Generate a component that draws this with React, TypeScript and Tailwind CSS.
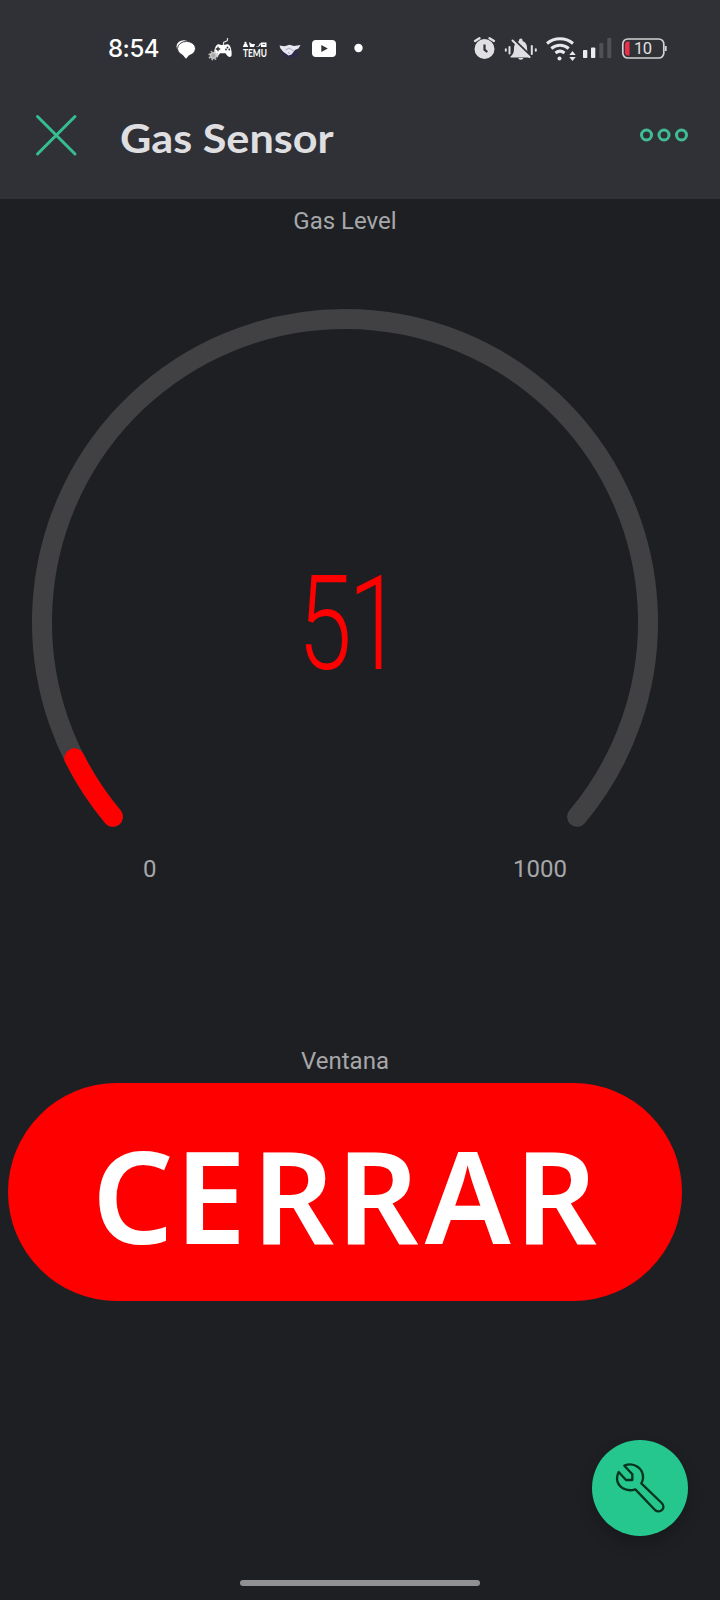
import React from "react";

const START = 140;
const SWEEP = 260;

function point(angle: number) {
  const a = (angle * Math.PI) / 180;
  return `${(345 + 303 * Math.cos(a)).toFixed(2)} ${(622 + 303 * Math.sin(a)).toFixed(2)}`;
}

function arc(fraction: number) {
  const end = START + SWEEP * fraction;
  return `M${point(START)} A303 303 0 ${SWEEP * fraction > 180 ? 1 : 0} 1 ${point(end)}`;
}

function NotificationIcons() {
  return (
    <>
      <svg className="h-10 w-9" viewBox="170 28 36 40" fill="#fff">
        <ellipse cx="183.800" cy="46.500" rx="7.300" ry="6.300" />
        <ellipse cx="186.500" cy="48.600" rx="9" ry="7.200" stroke="#303136" strokeWidth="0.900" />
        <path d="M182 54l4 4.800 4-4.800z" />
      </svg>
      <svg className="h-10 w-8" viewBox="206 28 32 40" fill="#fff">
        <path d="M223.500 45v-2.200c0-1.500 4-1 4-2.800v-2" fill="none" stroke="#ddd" strokeWidth="1.200" />
        <path d="M217.500 44.500c2-.8 3 .6 5 .6s4-1.400 6-.6c2.500 1 3.700 8.500 3 11-.8 2.700-4 1.500-6-2.300h-5.500c-2 3.800-5.300 4.800-6 2.300-.6-2.500 1-10 3.500-11z" />
        <path d="M218 46.800v4.400m-2.200-2.200h4.400" stroke="#303136" strokeWidth="1.300" />
        <circle cx="227.500" cy="47.500" r=".9" fill="#303136" />
        <circle cx="229.300" cy="49.500" r=".9" fill="#303136" />
        <circle cx="226" cy="49.500" r=".9" fill="#303136" />
        <circle cx="213.300" cy="55.500" r="2.800" fill="#a8a8aa" stroke="#c8c8c8" strokeWidth="1.500" />
        <circle cx="213.300" cy="55.500" r="4.300" fill="none" stroke="#c4c4c4" strokeWidth="1.300" strokeDasharray="1.700 1.700" />
      </svg>
      <svg className="h-10 w-[37px]" viewBox="238 28 37 40" fill="#fff">
        <path d="M243 46.500l1-2.500h3l1 2.500v.5h-5zM245.500 41.500l1.500 1.500-1.500 1.500-1.500-1.500zM249 42l3 2h3l-1 3h-4zM256 46.500c2 0 3-.5 4-3.500l1 .5c-.3 2.300-1.500 3.500-4.500 3.500zM261 42.500h5.500v4.500h-5.500z" />
        <path d="M262.500 44.500h2.500" fill="none" stroke="#303136" strokeWidth=".7" />
        <text x="243" y="57" textLength="24" lengthAdjust="spacingAndGlyphs" fontFamily="Lato" fontWeight="700" fontSize="10.500">TEMU</text>
      </svg>
      <svg className="h-10 w-8" viewBox="275 28 32 40">
        <ellipse cx="290" cy="53" rx="8" ry="5" fill="#2c2a48" />
        <path d="M279.500 45.500l5 .8 5-1.500 4.500 1.200 6.500-1-2 3.500-3.500 1.500-3.500 4.500-3 1-5-3.500-3-3.500z" fill="#e8e7f2" />
        <path d="M285.500 50l3.500-2 4.500 3M288 52.500l2 1" fill="none" stroke="#8a87aa" strokeWidth=".7" />
      </svg>
      <svg className="h-10 w-[36px]" viewBox="307 28 36 40">
        <rect x="312" y="40" width="24" height="17" rx="4" fill="#fff" />
        <path d="M321.300 45v7l6.500-3.500z" fill="#303136" />
      </svg>
      <svg className="h-10 w-8" viewBox="343 28 32 40">
        <circle cx="358.500" cy="48" r="4.200" fill="#fff" />
      </svg>
    </>
  );
}

function SystemIcons() {
  return (
    <>
      <svg className="h-10 w-[30px]" viewBox="470 28 30 40">
        <circle cx="484.500" cy="49" r="10" fill="#e0e0e2" />
        <path d="M484.500 44.500v5.200l2.800 2.300" fill="none" stroke="#303136" strokeWidth="2.200" />
        <path d="M475 41l4.500-2.800M489.500 38.200l4.500 2.800" stroke="#e0e0e2" strokeWidth="2.300" strokeLinecap="round" />
      </svg>
      <svg className="h-10 w-[42px]" viewBox="500 28 42 40">
        <path d="M510.500 56.500c2.500-2 3.500-4 3.500-8 0-4.500 2.500-6.500 5-7.300v-1a1.800 1.800 0 013.600 0v1c2.700.8 4.500 2.800 4.500 7.300 0 4 1 6 3.500 8v1h-20zM518.300 58h5a2.500 1.800 0 01-5 0z" fill="#e0e0e2" />
        <path d="M514.500 40.500l17 16.500" stroke="#303136" strokeWidth="2.500" />
        <path d="M512.500 40.500l17 16.500" stroke="#e0e0e2" strokeWidth="2" strokeLinecap="round" />
        <path d="M505.800 49.300v1.500M509.500 47v6.500M531.800 46v8M535.800 49.300v1.500" stroke="#e0e0e2" strokeWidth="2" strokeLinecap="round" />
      </svg>
      <svg className="h-10 w-[37px]" viewBox="542 28 37 40" fill="none" stroke="#e8e8ea" strokeWidth="3">
        <path d="M547 43.500c7.500-6.300 18.500-6.300 26 0M551.300 48.500c5-4.400 12.400-4.400 17.400 0M555.500 53c2.700-2.300 6.300-2.300 9 0" />
        <circle cx="559.500" cy="58.500" r="2" fill="#e8e8ea" stroke="none" />
        <path d="M572.500 51l3.200 4h-6.400zM572.500 61l3.200-4h-6.400z" fill="#e8e8ea" stroke="none" />
      </svg>
      <svg className="h-10 w-[38px]" viewBox="579 28 38 40">
        <rect x="583" y="50" width="4.300" height="8" rx=".8" fill="#ececee" />
        <rect x="591" y="47.500" width="4.300" height="10.500" rx=".8" fill="#ececee" />
        <rect x="599.300" y="43" width="4" height="15" rx=".8" fill="#505155" />
        <rect x="607.300" y="38" width="4" height="20" rx=".8" fill="#505155" />
      </svg>
      <svg className="h-10 w-[55px]" viewBox="617 28 55 40">
        <rect x="622.800" y="39" width="41" height="19" rx="5" fill="none" stroke="#d2d2d4" strokeWidth="1.700" />
        <path d="M665.800 46v5" stroke="#d2d2d4" strokeWidth="1.800" />
        <path d="M629.500 41.500v14h-1.500a3 3 0 01-3-3v-8a3 3 0 013-3z" fill="#ef2f49" />
        <text x="634" y="54.300" fill="#e0e0e2" fontFamily="Roboto" fontSize="16.500" textLength="18">10</text>
      </svg>
    </>
  );
}

export default function App() {
  return (
    <div className="relative flex h-[1600px] w-[720px] flex-col overflow-hidden bg-[#1e1f23] font-['Roboto',sans-serif]">
      <header className="h-[199px] bg-[#303136] pt-7">
        <div className="flex h-10 items-center pr-12 pl-[108px]">
          <span className="w-[62px] pt-0.5 font-['Inter',sans-serif] text-[24px] leading-10 font-[450] tracking-[-0.5px] text-white">8:54</span>
          <NotificationIcons />
          <div className="ml-auto flex">
            <SystemIcons />
          </div>
        </div>
        <div className="mt-7 flex h-[78px] items-center pr-6 pl-8">
          <svg className="h-12 w-12" viewBox="32 111 48 48" stroke="#35bf90" strokeWidth="3" strokeLinecap="round">
            <path d="M37.500 116.500l37.500 37.500M75 116.500l-37.500 37.500" />
          </svg>
          <h1 className="ml-10 origin-left scale-x-[1.08] pt-1.5 font-['Lato',sans-serif] text-[40px] leading-[48px] font-bold text-[#dfdfe2]">Gas Sensor</h1>
          <svg className="ml-auto h-4 w-14" viewBox="640 127.500 56 16" fill="none" stroke="#3fbe94" strokeWidth="3">
            <circle cx="646.500" cy="135.500" r="5" />
            <circle cx="664" cy="135.500" r="5" />
            <circle cx="681.500" cy="135.500" r="5" />
          </svg>
        </div>
      </header>

      <main className="flex w-[690px] flex-col">
        <p className="pt-1.5 text-center text-[24px] leading-8 text-[#a6a7aa]">Gas Level</p>
        <div className="grid h-[610px] place-items-center">
          <svg className="col-start-1 row-start-1 h-[610px] w-[690px]" viewBox="0 237 690 610" fill="none" strokeWidth="20" strokeLinecap="round">
            <path d={arc(1)} stroke="#414144" />
            <path d={arc(0.051)} stroke="#ff0000" />
          </svg>
          <span className="col-start-1 row-start-1 mt-[164px] ml-[7px] scale-x-[0.74] text-[132px] leading-none font-[280] tracking-[-5px] text-[#ff0000]">51</span>
        </div>
        <div className="flex h-[43px] items-end justify-between pr-[123px] pl-[143px] text-[24px] leading-[42px] text-[#a6a7aa]">
          <span>0</span>
          <span>1000</span>
        </div>
        <p className="mt-[155px] text-center text-[24px] leading-8 text-[#a6a7aa]">Ventana</p>
        <button className="mt-1.5 ml-2 flex h-[218px] w-[674px] items-center justify-center rounded-full bg-[#ff0000] pt-[5px] font-['Noto_Sans',sans-serif] text-[128px] leading-none font-semibold text-white">
          <span className="tracking-[1px]">C</span>
          <span className="tracking-[6px]">E</span>
          <span className="tracking-[2px]">R</span>
          <span className="tracking-[6px]">R</span>
          <span className="tracking-[4px]">A</span>
          <span className="pr-px">R</span>
        </button>
      </main>

      <button className="absolute top-[1440px] left-[592px] h-24 w-24 rounded-full bg-[#26c78f] shadow-[0_8px_16px_rgba(0,0,0,0.2)]">
        <svg className="h-24 w-24" viewBox="66 60 288 288" fill="none" stroke="#06351f" strokeWidth="7" strokeLinejoin="round">
          <path d="M163 137C192 125 221 145 219 175Q218 183 214 190L275 249C290 264 270 282 255 270L196 208C168 217 142 201 141 176Q141 165 146 156L168 180H187V163Z" />
        </svg>
      </button>
      <div className="mt-auto mb-[14px] h-1.5 w-60 self-center rounded-full bg-[#919193]" />
    </div>
  );
}
